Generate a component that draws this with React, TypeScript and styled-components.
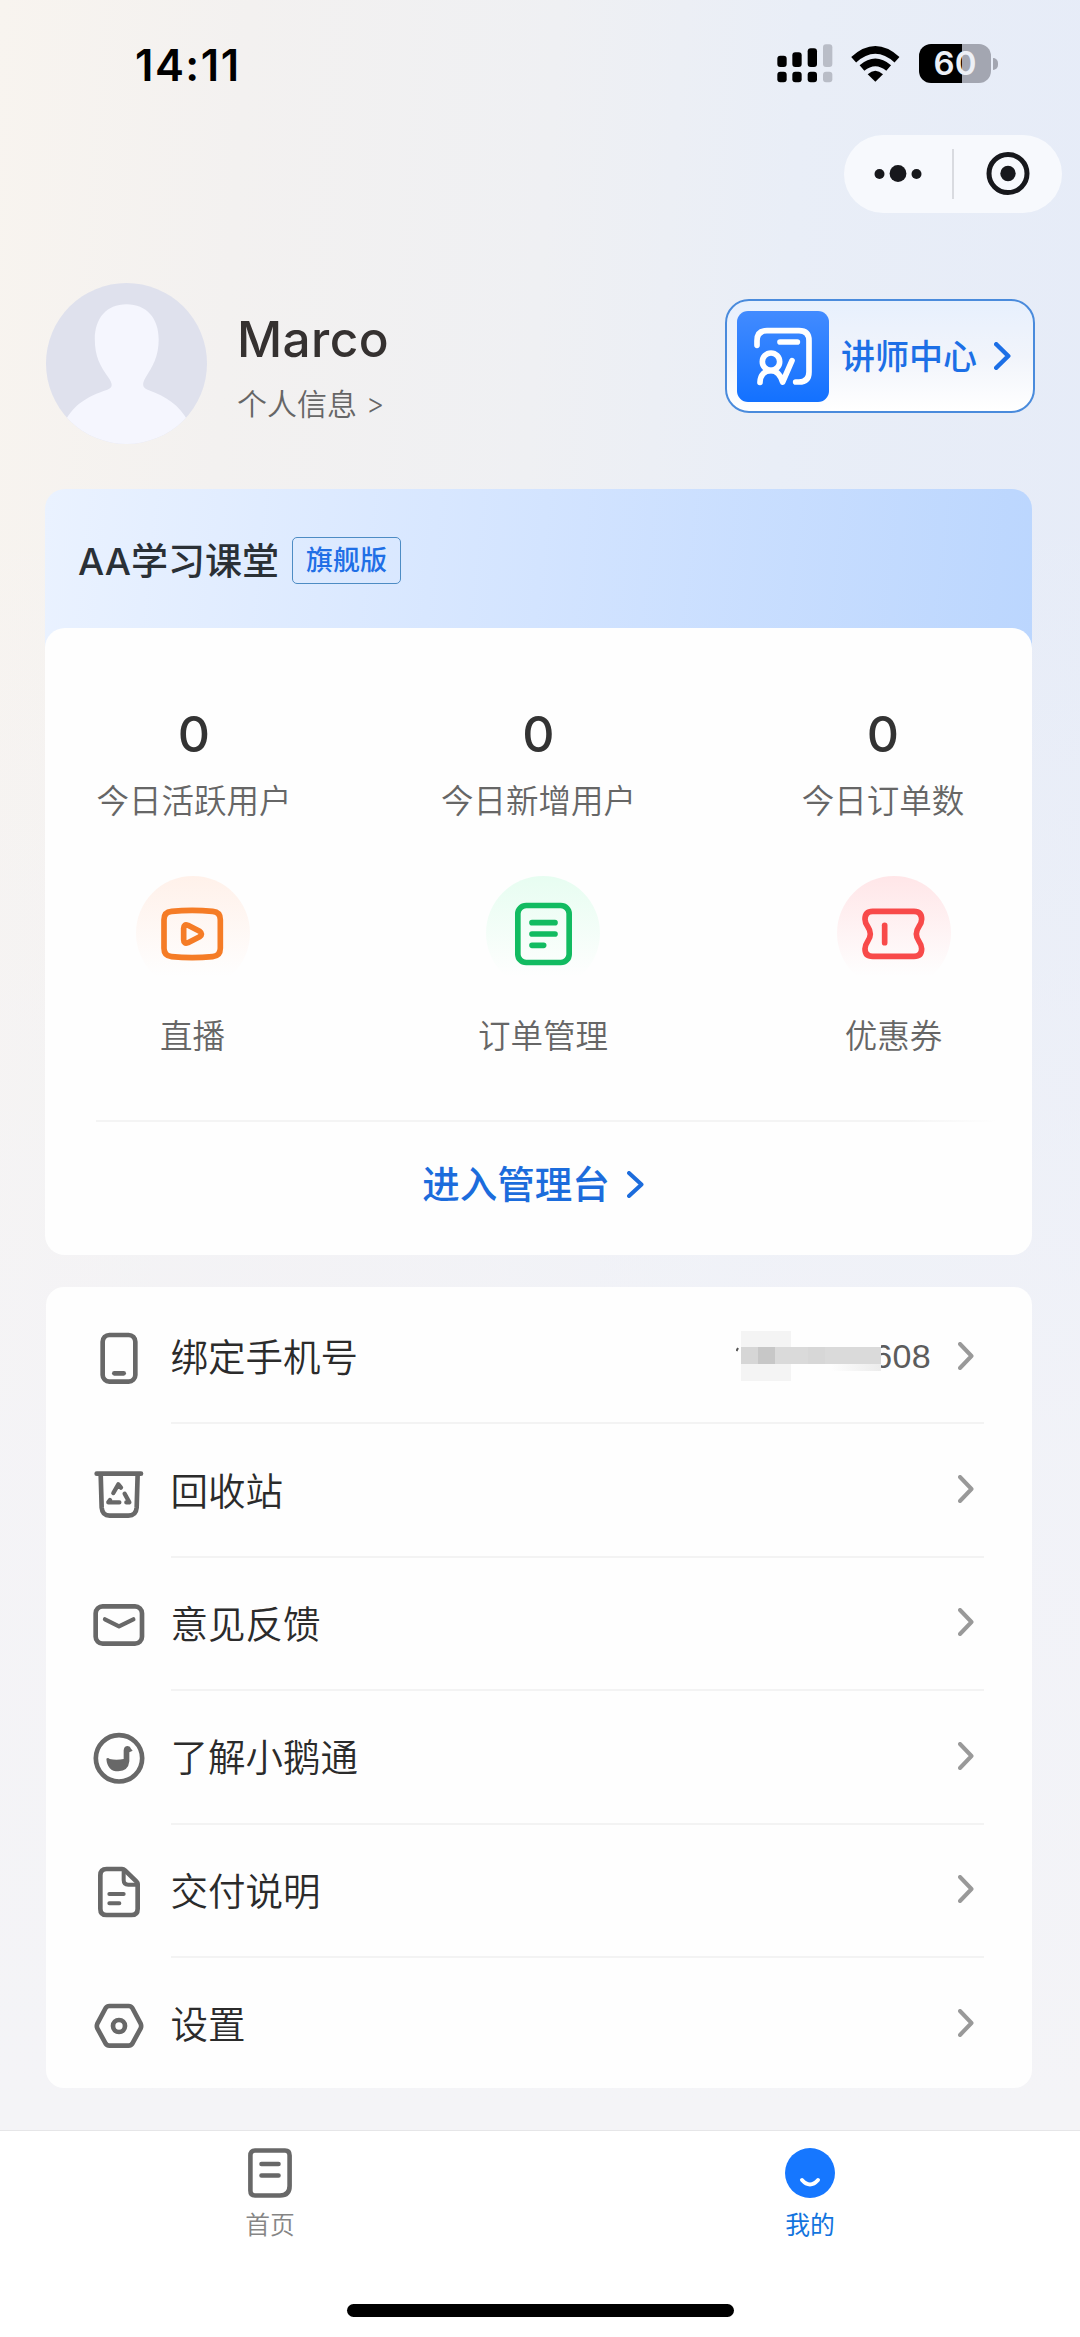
import React from "react";
import styled, { createGlobalStyle, css } from "styled-components";

const GlobalStyle = createGlobalStyle`
  * { box-sizing: border-box; }
  body {
    margin: 0;
    font-family: Inter, "Noto Sans CJK SC", sans-serif;
    color: #2b2b2b;
  }
`;

const Page = styled.div`
  width: 1080px;
  height: 2337px;
  display: flex;
  flex-direction: column;
  overflow: hidden;
  background:
    linear-gradient(180deg, rgba(244, 244, 248, 0) 0%, rgba(244, 244, 248, 0) 22%, rgba(244, 244, 248, 0.8) 62%, #f4f4f7 90%),
    linear-gradient(94deg, #f8f4ef 0%, #f3f1f0 20%, #eff0f3 45%, #e9eef7 65%, #e5ebf8 100%);
`;

/* ---------- status bar ---------- */

const StatusBar = styled.div`
  height: 130px;
  padding: 0 82px 0 135px;
  display: flex;
  align-items: center;
  justify-content: space-between;
`;

const Clock = styled.div`
  font-size: 43.5px;
  font-weight: 600;
  line-height: 52px;
  letter-spacing: 1.5px;
  color: #000;
`;

const StatusIcons = styled.div`
  display: flex;
  align-items: center;
  margin-top: -3px;
`;

const BatteryBody = styled.div`
  width: 72px;
  height: 39px;
  margin-left: 19px;
  border-radius: 12px;
  display: flex;
  align-items: center;
  justify-content: center;
  background: linear-gradient(90deg, #000 60%, #a3a6b1 60%);
  color: #edf0f6;
  font-size: 33px;
  font-weight: 600;
  line-height: 39px;
`;

const BatteryNub = styled.div`
  width: 5px;
  height: 12px;
  margin-left: 2px;
  border-radius: 0 5px 5px 0;
  background: #a3a6b1;
`;

/* ---------- capsule ---------- */

const NavRow = styled.div`
  padding: 5px 18px 0 0;
  display: flex;
  justify-content: flex-end;
`;

const Capsule = styled.div`
  width: 218px;
  height: 78px;
  border-radius: 39px;
  background: #f7f9fd;
  display: flex;
  align-items: center;
`;

const CapsuleHalf = styled.div`
  flex: 1;
  display: flex;
  align-items: center;
  justify-content: center;
`;

const CapsuleLine = styled.div`
  width: 1.5px;
  height: 50px;
  background: #d9dbe0;
`;

/* ---------- profile ---------- */

const Profile = styled.div`
  height: 160px;
  margin: 70px 45px 0 46px;
  display: flex;
`;

const UserInfo = styled.div`
  margin-left: 30px;
  padding-top: 26px;
  flex: 1;
`;

const UserName = styled.div`
  font-size: 49.5px;
  font-weight: 500;
  line-height: 60px;
  letter-spacing: 0.4px;
  color: #353130;
`;

const UserLink = styled.div`
  display: flex;
  gap: 9px;
  margin-top: 13px;
  font-size: 30px;
  font-weight: 350;
  line-height: 44px;
  color: #666;
`;

const Angle = styled.span`
  font-size: 28px;
`;

const LecturerButton = styled.div`
  width: 310px;
  height: 114px;
  margin-top: 16px;
  padding-left: 10px;
  border: 2px solid #4a8bdc;
  border-radius: 24px;
  background: linear-gradient(180deg, #e7f0fd 0%, #f1f4fb 50%, #ffffff 100%);
  display: flex;
  align-items: center;
`;

const LecturerIcon = styled.div`
  width: 92px;
  height: 91px;
  border-radius: 11px;
  background: linear-gradient(180deg, #428bff 0%, #1371ff 100%);
`;

const LecturerText = styled.div`
  margin: 1px 17px 0 12px;
  font-size: 34px;
  font-weight: 500;
  line-height: 50px;
  color: #1c6fe6;
`;

/* ---------- school card ---------- */

const SchoolCard = styled.section`
  margin: 46px 48px 0 45px;
  border-radius: 20px;
  background: linear-gradient(96deg, #eaf2ff 0%, #d3e4ff 50%, #bbd6fe 100%) no-repeat;
  background-size: 100% 170px;
`;

const SchoolHeader = styled.div`
  height: 139px;
  padding: 4px 0 0 33px;
  display: flex;
  align-items: center;
`;

const SchoolName = styled.div`
  margin-top: 3px;
  font-size: 37px;
  font-weight: 500;
  line-height: 54px;
  color: #2a3036;
`;

const Edition = styled.div`
  height: 47px;
  margin-left: 13px;
  padding: 0 13px;
  border: 1.5px solid #4d8cc4;
  border-radius: 5px;
  font-size: 27px;
  font-weight: 500;
  line-height: 46px;
  color: #1f6fe6;
`;

const SchoolPanel = styled.div`
  height: 627px;
  padding-top: 76px;
  border-radius: 20px;
  background: #fefefe;
  display: flex;
  flex-direction: column;
`;

const Stats = styled.div`
  display: flex;
  justify-content: space-between;
  padding: 0 51px;
`;

const Stat = styled.div`
  width: 196px;
  display: flex;
  flex-direction: column;
  align-items: center;
  gap: 16px;
`;

const StatValue = styled.div`
  font-size: 50px;
  font-weight: 500;
  line-height: 60px;
  color: #333;
`;

const captionText = css`
  font-size: 32.5px;
  font-weight: 350;
  line-height: 44px;
  color: #666;
  white-space: nowrap;
`;

const Caption = styled.div`
  ${captionText}
`;

const Shortcuts = styled.div`
  display: flex;
  justify-content: space-between;
  padding: 0 73px 0 82px;
  margin-top: 52px;
`;

const Shortcut = styled.div`
  width: 131px;
  display: flex;
  flex-direction: column;
  align-items: center;
  gap: 25px;
`;

const Halo = styled.div<{ $tint: string }>`
  width: 114px;
  height: 114px;
  border-radius: 50%;
  display: flex;
  align-items: center;
  justify-content: center;
  background: linear-gradient(180deg, ${(p) => p.$tint} 0%, #fefefe 88%);
`;

const PanelLine = styled.div`
  height: 2px;
  margin: 61px 36px 0 51px;
  background: linear-gradient(90deg, #f4f4f4 90%, #fefefe 100%);
`;

const ConsoleLink = styled.div`
  flex: 1;
  padding: 0 11px 8px 0;
  display: flex;
  align-items: center;
  justify-content: center;
  gap: 17px;
  font-size: 37.5px;
  font-weight: 500;
  line-height: 54px;
  color: #1c6cdc;
`;

/* ---------- menu ---------- */

const Menu = styled.section`
  height: 801px;
  margin: 32px 48px 0 46px;
  padding-top: 4px;
  border-radius: 18px;
  background: #fefefe;
  overflow: hidden;
`;

const MenuRow = styled.div`
  height: 133.4px;
  padding-left: 45.5px;
  display: flex;
`;

const MenuIcon = styled.div`
  width: 54px;
  display: flex;
  align-items: center;
`;

const MenuBody = styled.div<{ $last: boolean }>`
  flex: 1;
  margin: 0 48px 0 25px;
  padding-right: 10px;
  display: flex;
  align-items: center;
  border-bottom: 2px solid ${(p) => (p.$last ? "transparent" : "#f3f3f3")};
`;

const MenuLabel = styled.div`
  flex: 1;
  padding-top: 3px;
  font-size: 37.5px;
  font-weight: 350;
  line-height: 54px;
  color: #2b2b2b;
`;

const MenuEnd = styled.div`
  display: flex;
  align-items: center;
  margin-bottom: 2px;
`;

const Phone = styled.div`
  display: flex;
  align-items: center;
  margin-right: 27px;
`;

const PhoneTail = styled.div`
  font-family: "Liberation Sans", sans-serif;
  font-size: 34px;
  line-height: 40px;
  letter-spacing: 0.3px;
  color: #5c5c5c;
`;

const MosaicMask = styled.div`
  position: relative;
  z-index: 1;
  height: 50px;
  margin-right: -8px;
`;

/* ---------- tab bar ---------- */

const TabBar = styled.nav`
  height: 207px;
  margin-top: auto;
  border-top: 1.5px solid #e6e6e8;
  background: #fff;
  display: flex;
  flex-direction: column;
  align-items: center;
`;

const Tabs = styled.div`
  width: 100%;
  height: 173px;
  padding-top: 17px;
  display: flex;
`;

const Tab = styled.div<{ $active?: boolean }>`
  flex: 1;
  display: flex;
  flex-direction: column;
  align-items: center;
  gap: 9px;
  font-size: 24.8px;
  line-height: 36px;
  font-weight: ${(p) => (p.$active ? 400 : 350)};
  color: ${(p) => (p.$active ? "#1274de" : "#858585")};
`;

const HomeIndicator = styled.div`
  width: 387px;
  height: 13px;
  border-radius: 7px;
  background: #000;
`;

/* ---------- drawings ---------- */

const Signal = () => (
  <svg width="56" height="39" viewBox="233 73 168 117">
    <g fill="#000">
      <rect x="234" y="108" width="28" height="34" rx="9" />
      <rect x="279" y="98" width="28" height="44" rx="9" />
      <rect x="325" y="86" width="28" height="56" rx="9" />
      <rect x="234" y="156" width="28" height="32" rx="9" />
      <rect x="279" y="156" width="28" height="32" rx="9" />
      <rect x="325" y="156" width="28" height="32" rx="9" />
    </g>
    <g fill="#b9bdc7">
      <rect x="371" y="74" width="28" height="68" rx="9" />
      <rect x="371" y="156" width="28" height="32" rx="9" />
    </g>
  </svg>
);

const WifiSvg = styled.svg`
  margin-left: 18px;
`;

const Wifi = () => (
  <WifiSvg width="49" height="39" viewBox="455 70 147 117">
    <g fill="none" stroke="#000" strokeWidth="22">
      <path d="M463 117 Q528 58 593 117" />
      <path d="M488 142 Q528 108 568 142" />
    </g>
    <path d="M505 161 Q528 140 551 161 L528 183Z" fill="#000" />
  </WifiSvg>
);

type ChevronProps = { color: string; width?: number; height?: number; stroke?: number };

const Chevron = ({ color, width = 17, height = 28, stroke = 4 }: ChevronProps) => (
  <svg width={width} height={height} viewBox={`0 0 ${width} ${height}`}>
    <path
      d={`M${stroke / 2} ${stroke / 2} L${width - stroke / 2 - 0.5} ${height / 2} L${stroke / 2} ${height - stroke / 2}`}
      fill="none" stroke={color} strokeWidth={stroke} strokeLinecap="round" strokeLinejoin="round"
    />
  </svg>
);

const Avatar = () => (
  <svg width="161" height="161" viewBox="46 283 160 160">
    <clipPath id="avatarClip"><circle cx="126" cy="363" r="80" /></clipPath>
    <g clipPath="url(#avatarClip)">
      <rect x="46" y="283" width="160" height="160" fill="#dfe1ed" />
      <path
        d="M126 304 C146 304 158 318 158 339 C158 356 152 366 145 377 C141 384 142 387 147 389 C166 396 178 404 187 420 V445 H65 V420 C74 404 86 396 107 389 C112 387 113 384 108 377 C100 366 94.500 356 94.500 339 C94.500 318 106 304 126 304Z"
        fill="#f5f6fe"
      />
    </g>
  </svg>
);

const Lecturer = () => (
  <svg width="92" height="91" viewBox="108 93 276 273">
    <g fill="none" stroke="#fff" strokeWidth="17" strokeLinecap="round" strokeLinejoin="round">
      <path d="M168 196 V182 Q168 152 198 152 H294 Q324 152 324 182 V276 Q324 306 294 306 H284" />
      <path d="M237 186 H289" />
      <circle cx="210" cy="245" r="26" />
      <path d="M177 307 C178 284 192 272 210 272 C230 272 239 288 245 306 L273 242" />
    </g>
  </svg>
);

const Live = () => (
  <svg width="66.670" height="66.670" viewBox="116 119 200 200">
    <g fill="none" stroke="#f57c26" strokeWidth="17" strokeLinejoin="round">
      <path d="M131 178 Q131 155 154 153 Q215 147 277 153 Q300 155 300 178 V264 Q300 287 277 289 Q215 295 154 289 Q131 287 131 264Z" />
      <path d="M190 204 Q190 190 203 195 L238 213 Q249 221 238 229 L203 247 Q190 252 190 238Z" />
    </g>
  </svg>
);

const Orders = () => (
  <svg width="66.670" height="66.670" viewBox="1167 119 200 200">
    <g fill="none" stroke="#12bb61" strokeWidth="17" strokeLinecap="round">
      <rect x="1190.500" y="135.500" width="154" height="171" rx="25" />
      <path d="M1233 187 H1302 M1233 221 H1302 M1233 255 H1268" />
    </g>
  </svg>
);

const Coupon = () => (
  <svg width="66.670" height="66.670" viewBox="480 119 200 200">
    <g fill="none" stroke="#f84a4a" strokeWidth="17" strokeLinecap="round">
      <path d="M518 153 H642 Q665 153 665 177 C665 197 649 200 649 221 C649 242 665 245 665 265 Q665 288 642 288 H518 Q495 288 495 265 C495 245 511 242 511 221 C511 200 495 197 495 177 Q495 153 518 153Z" />
      <path d="M554 195 V247" />
    </g>
  </svg>
);

const Outline = ({ top, children }: { top: number; children: React.ReactNode }) => (
  <svg width="54" height="54" viewBox={`155 ${top} 162 162`}>
    <g fill="none" stroke="#686868" strokeWidth="14" strokeLinecap="round" strokeLinejoin="round">
      {children}
    </g>
  </svg>
);

const PhoneIcon = () => (
  <Outline top={151}>
    <rect x="187" y="163" width="98" height="140" rx="20" />
    <path d="M222 278 H250" />
  </Outline>
);

const BinIcon = () => (
  <Outline top={551}>
    <path d="M169 580 H302 M181 580 L184 682 Q186 706 208 706 H264 Q287 706 289 682 L292 580" />
    <path d="M219 638 L234 612 L242 622 M253 640 L267 666 H258 M237 666 H204 L209 659" strokeWidth="13" />
  </Outline>
);

const MailIcon = () => (
  <Outline top={951}>
    <rect x="166" y="979" width="139" height="112" rx="21" />
    <path d="M194 1018 L236 1039 L279 1018" strokeWidth="13" />
  </Outline>
);

const GooseIcon = () => (
  <Outline top={152}>
    <circle cx="236" cy="234" r="69.500" />
    <path
      d="M198 235 Q203 231 208 236 Q228 240 250 236 V210 Q251 197 262 197 Q270 197 272 205 L277 211 L267 216 V243 Q264 272 234 273 Q201 273 198 235Z"
      fill="#686868" stroke="none"
    />
  </Outline>
);

const DocIcon = () => (
  <Outline top={552}>
    <path d="M245 567 H199 Q180 567 180 586 V686 Q180 705 199 705 H273 Q292 705 292 686 V612 Q292 608 288 604 L254 571 Q250 567 245 567Z" />
    <path d="M250 572 V600 Q250 614 264 614 H288" strokeWidth="12" />
    <path d="M207 642 H250 M207 670 H237" strokeWidth="12" />
  </Outline>
);

const GearIcon = () => (
  <Outline top={953}>
    <path d="M207 977 H265 Q272 977 276 983 L301 1030 Q304 1037 301 1044 L276 1090 Q272 1096 265 1096 H207 Q200 1096 196 1090 L171 1044 Q168 1037 171 1030 L196 983 Q200 977 207 977Z" />
    <circle cx="236" cy="1037" r="18" />
  </Outline>
);

const Mosaic = () => (
  <svg width="145" height="50" viewBox="0 0 145 50">
    <defs>
      <linearGradient id="mosaicFade" x1="0" x2="1" y1="0" y2="0">
        <stop offset="0" stopColor="#fefefe" />
        <stop offset="1" stopColor="#ececec" />
      </linearGradient>
    </defs>
    <rect x="95" y="8" width="50" height="34" fill="#fefefe" />
    <path d="M0.500 20 L2 17" stroke="#555" strokeWidth="2" />
    <rect x="5" y="0" width="50" height="50" fill="#f4f4f4" />
    <rect x="95" y="32" width="50" height="8" fill="url(#mosaicFade)" />
    <rect x="5" y="16" width="140" height="17" fill="#dadada" />
    <rect x="5" y="16" width="17" height="17" fill="#d6d6d6" />
    <rect x="22" y="16" width="17" height="17" fill="#c7c7c7" />
    <rect x="72" y="16" width="17" height="17" fill="#d7d7d7" />
  </svg>
);

const HomeIcon = () => (
  <svg width="50" height="50" viewBox="0 0 50 50">
    <g fill="none" stroke="#686868" strokeWidth="4.600" strokeLinecap="round">
      <path d="M10 2.500 H40 Q44.600 2.500 44.600 7.500 V38 Q44.600 47.500 35 47.500 H10 Q5.400 47.500 5.400 42.500 V7.500 Q5.400 2.500 10 2.500Z" strokeLinejoin="round" />
      <path d="M16.500 16 H33.500 M16.500 27.500 H33.500" />
    </g>
  </svg>
);

const MineIcon = () => (
  <svg width="50" height="50" viewBox="0 0 50 50">
    <circle cx="25" cy="25" r="25" fill="#1677ff" />
    <path d="M17 32 Q25 41 33 32" fill="none" stroke="#fff" strokeWidth="4" strokeLinecap="round" />
  </svg>
);

/* ---------- data ---------- */

const stats = [
  { value: 0, label: "今日活跃用户" },
  { value: 0, label: "今日新增用户" },
  { value: 0, label: "今日订单数" },
];

const shortcuts = [
  { label: "直播", tint: "#fff1ea", Icon: Live },
  { label: "订单管理", tint: "#e7fdf1", Icon: Orders },
  { label: "优惠券", tint: "#ffe6e8", Icon: Coupon },
];

const menu = [
  { label: "绑定手机号", Icon: PhoneIcon, tail: "608" },
  { label: "回收站", Icon: BinIcon },
  { label: "意见反馈", Icon: MailIcon },
  { label: "了解小鹅通", Icon: GooseIcon },
  { label: "交付说明", Icon: DocIcon },
  { label: "设置", Icon: GearIcon },
];

export default function App() {
  return (
    <Page>
      <GlobalStyle />
      <StatusBar>
        <Clock>14:11</Clock>
        <StatusIcons>
          <Signal />
          <Wifi />
          <BatteryBody>60</BatteryBody>
          <BatteryNub />
        </StatusIcons>
      </StatusBar>

      <NavRow>
        <Capsule>
          <CapsuleHalf>
            <svg width="48" height="20" viewBox="0 0 48 20" fill="#17181c">
              <circle cx="5.500" cy="10" r="5" />
              <circle cx="24" cy="9.500" r="8.400" />
              <circle cx="42.500" cy="10" r="5" />
            </svg>
          </CapsuleHalf>
          <CapsuleLine />
          <CapsuleHalf>
            <svg width="44" height="44" viewBox="0 0 44 44">
              <circle cx="22" cy="21.500" r="19" fill="none" stroke="#17181c" strokeWidth="5" />
              <circle cx="22" cy="21.500" r="7.700" fill="#17181c" />
            </svg>
          </CapsuleHalf>
        </Capsule>
      </NavRow>

      <Profile>
        <Avatar />
        <UserInfo>
          <UserName>Marco</UserName>
          <UserLink>
            个人信息 <Angle>&gt;</Angle>
          </UserLink>
        </UserInfo>
        <LecturerButton>
          <LecturerIcon>
            <Lecturer />
          </LecturerIcon>
          <LecturerText>讲师中心</LecturerText>
          <Chevron color="#1c6fe6" width={17} height={28} stroke={4.5} />
        </LecturerButton>
      </Profile>

      <SchoolCard>
        <SchoolHeader>
          <SchoolName>AA学习课堂</SchoolName>
          <Edition>旗舰版</Edition>
        </SchoolHeader>
        <SchoolPanel>
          <Stats>
            {stats.map((s) => (
              <Stat key={s.label}>
                <StatValue>{s.value}</StatValue>
                <Caption>{s.label}</Caption>
              </Stat>
            ))}
          </Stats>
          <Shortcuts>
            {shortcuts.map(({ label, tint, Icon }) => (
              <Shortcut key={label}>
                <Halo $tint={tint}>
                  <Icon />
                </Halo>
                <Caption>{label}</Caption>
              </Shortcut>
            ))}
          </Shortcuts>
          <PanelLine />
          <ConsoleLink>
            进入管理台
            <Chevron color="#1c6cdc" width={17} height={27} stroke={4} />
          </ConsoleLink>
        </SchoolPanel>
      </SchoolCard>

      <Menu>
        {menu.map(({ label, Icon, tail }, i) => (
          <MenuRow key={label}>
            <MenuIcon>
              <Icon />
            </MenuIcon>
            <MenuBody $last={i === menu.length - 1}>
              <MenuLabel>{label}</MenuLabel>
              <MenuEnd>
                {tail && (
                  <Phone>
                    <MosaicMask>
                      <Mosaic />
                    </MosaicMask>
                    <PhoneTail>{tail}</PhoneTail>
                  </Phone>
                )}
                <Chevron color="#999" width={16} height={28} stroke={4} />
              </MenuEnd>
            </MenuBody>
          </MenuRow>
        ))}
      </Menu>

      <TabBar>
        <Tabs>
          <Tab>
            <HomeIcon />
            首页
          </Tab>
          <Tab $active>
            <MineIcon />
            我的
          </Tab>
        </Tabs>
        <HomeIndicator />
      </TabBar>
    </Page>
  );
}
